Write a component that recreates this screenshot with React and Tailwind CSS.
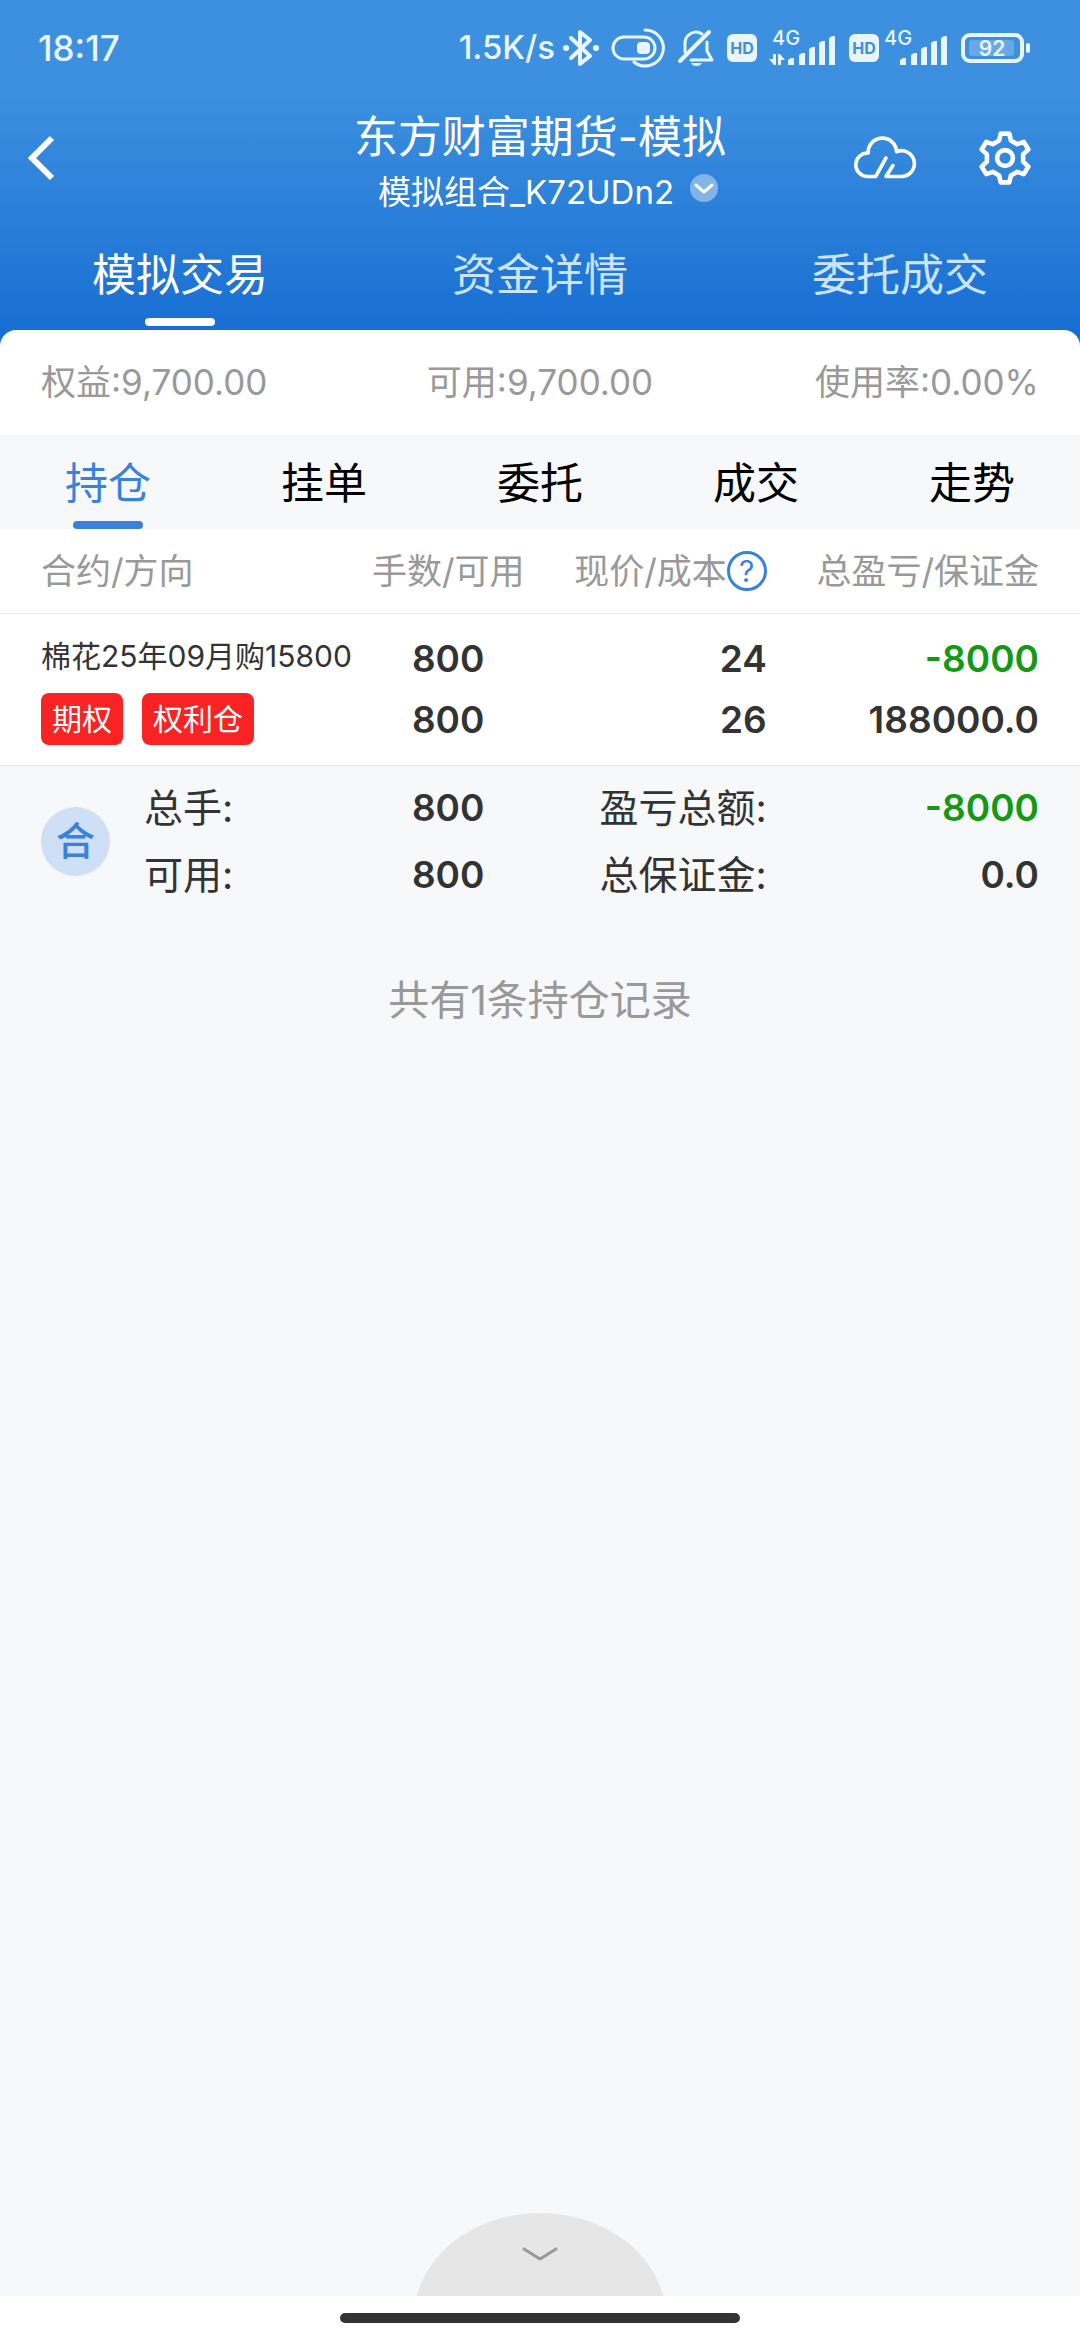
import React, { useState } from 'react';

const FONT = "font-['Inter','Noto_Sans_CJK_SC',sans-serif]";

const mainTabs = ['模拟交易', '资金详情', '委托成交'];
const subTabs = ['持仓', '挂单', '委托', '成交', '走势'];

const stats = [
  { label: '权益', value: '9,700.00' },
  { label: '可用', value: '9,700.00' },
  { label: '使用率', value: '0.00%' },
];

const positions = [
  {
    id: 1,
    name: '棉花25年09月购15800',
    tags: ['期权', '权利仓'],
    volume: '800',
    available: '800',
    price: '24',
    cost: '26',
    profit: '-8000',
    margin: '188000.0',
  },
];

const BluetoothIcon = () => (
  <svg className="w-9 h-10" viewBox="0 0 36 40" fill="none" stroke="currentColor" strokeWidth="4" strokeLinejoin="round" strokeLinecap="round">
    <path d="M8 10 L27 28 L17 36 V4 L27 12 L8 30" />
    <path d="M3 20 h.1 M33 20 h.1" strokeWidth="6" />
  </svg>
);

const ToggleIcon = () => (
  <svg className="w-[54px] h-10" viewBox="0 0 54 40" fill="none" stroke="currentColor" strokeWidth="3" strokeLinecap="round">
    <rect x="2" y="9" width="42" height="22" rx="11" />
    <rect x="26" y="14" width="13" height="12" rx="4" fill="currentColor" stroke="none" />
    <path d="M34 2 A18 18 0 1 1 23 34" />
  </svg>
);

const MuteIcon = () => (
  <svg className="w-[38px] h-10" viewBox="0 0 38 40" fill="none" stroke="currentColor" strokeWidth="3" strokeLinejoin="round" strokeLinecap="round">
    <path d="M32 4 L3 33" strokeWidth="4" />
    <path d="M8 24 V15 A11 11 0 0 1 25 6" />
    <path d="M30 14 V23 L35 32 H14" />
    <path d="M14 35 H25 A6 5 0 0 1 14 35 Z" fill="currentColor" stroke="none" />
  </svg>
);

const HdBadge = () => (
  <span className="flex items-center justify-center w-[30px] h-7 rounded-md bg-[#e8f5ff] text-[#3c90df] text-base font-bold">
    HD
  </span>
);

const SignalIcon = ({ active }) => (
  <svg className={active ? 'w-[68px] h-[52px]' : 'w-[66px] h-[52px]'} viewBox={active ? '0 -8 68 52' : '2 -8 66 52'} fill="currentColor">
    <text x="3" y="15" fontSize="20" fontWeight="500">4G</text>
    {active && <path d="M4 24 h3 v11 h-2 l-5 -6 h4 z M9 24 h2 l5 6 h-4 v5 h-3 z" />}
    <path d="M19 30 l3 -2 h3 v7 h-6 z M30 25 l3 -2 h3 v12 h-6 z M40 19 l3 -2 h3 v18 h-6 z M50 13 l3 -2 h3 v24 h-6 z M60 8 l3 -2 h3 v29 h-6 z" />
  </svg>
);

const BatteryIcon = () => (
  <svg className="w-[69px] h-[30px]" viewBox="0 0 69 30" fill="none">
    <rect x="2" y="2" width="59" height="26" rx="7" stroke="currentColor" strokeWidth="4" />
    <rect x="8" y="7" width="45" height="16" rx="2" fill="currentColor" opacity="0.25" />
    <rect x="65" y="10" width="4" height="10" rx="2" fill="currentColor" />
    <text x="31" y="23" fontSize="21" fontWeight="600" textAnchor="middle" fill="currentColor">92</text>
  </svg>
);

const CloudIcon = () => (
  <svg className="w-[66px] h-[47px]" viewBox="0 0 200 141" fill="none" stroke="currentColor" strokeWidth="11" strokeLinejoin="round" strokeLinecap="round">
    <path d="M103 75 L72 131 H45 A35 35 0 0 1 49 60 A43 43 0 0 1 135 56 A39 39 0 1 1 150 131 H103 L124 98" />
  </svg>
);

const GearIcon = () => (
  <svg className="w-[54px] h-[54px]" viewBox="-82 -82 164 164" fill="none" stroke="currentColor" strokeWidth="14" strokeLinejoin="round">
    <path d="M-18 -53 L-13 -74 H13 L18 -53 L37 -42 L57 -49 L71 -26 L55 -11 V11 L71 26 L57 49 L37 42 L18 53 L13 74 H-13 L-18 53 L-37 42 L-57 49 L-71 26 L-55 11 V-11 L-71 -26 L-57 -49 L-37 -42 Z" />
    <circle r="24" />
  </svg>
);

const StatusBar = () => (
  <div className="flex items-center justify-between h-24 pl-[38px] pr-[50px] text-[#e8f5ff]">
    <span className="text-[35px] font-medium">18:17</span>
    <div className="flex items-center gap-3">
      <div className="flex items-center gap-2">
        <span className="text-[33px] font-medium">1.5K/s</span>
        <BluetoothIcon />
      </div>
      <ToggleIcon />
      <MuteIcon />
      <HdBadge />
      <SignalIcon active />
      <div className="flex items-center gap-1">
        <HdBadge />
        <SignalIcon />
      </div>
      <BatteryIcon />
    </div>
  </div>
);

const Header = ({ tab, onTab }) => (
  <header className="pb-5 -mb-4 text-white bg-linear-to-b from-[#3c90df] from-27% to-[#156cd2]">
    <StatusBar />
    <div className="grid grid-cols-[1fr_auto_1fr] items-center h-[124px] px-7">
      <button aria-label="返回" className="justify-self-start">
        <svg className="w-7 h-12" viewBox="0 0 28 48" fill="none" stroke="currentColor" strokeWidth="6">
          <path d="M24 4 L4 24 L24 44" />
        </svg>
      </button>
      <div className="flex flex-col items-center pt-2">
        <h1 className="text-[44px] leading-[60px]">东方财富期货-模拟</h1>
        <button className="flex items-center gap-4 pl-4 text-[33px] leading-[50px]">
          模拟组合_K72UDn2
          <svg className="w-7 h-7 mb-2" viewBox="0 0 28 28" fill="none">
            <circle cx="14" cy="14" r="14" fill="#fff" fillOpacity="0.4" />
            <path d="M6 11 L14 18 L22 11" stroke="#fff" strokeWidth="3" strokeLinecap="round" strokeLinejoin="round" />
          </svg>
        </button>
      </div>
      <div className="flex items-center justify-self-end gap-[60px] pr-5">
        <button aria-label="云同步" className="pb-1"><CloudIcon /></button>
        <button aria-label="设置"><GearIcon /></button>
      </div>
    </div>
    <nav className="grid grid-cols-3">
      {mainTabs.map((name, i) => (
        <button key={name} onClick={() => onTab(i)} className="flex flex-col items-center h-[106px] pt-3 text-[44px] leading-[86px]">
          <span className={i === tab ? 'text-white' : 'text-[#cbe4fc]'}>{name}</span>
          {i === tab && <span className="w-[70px] h-2 rounded-sm bg-white shrink-0" />}
        </button>
      ))}
    </nav>
  </header>
);

const PositionTable = () => (
  <table className="w-full table-fixed border-collapse whitespace-nowrap text-[#333]">
    <colgroup>
      <col className="w-[33%]" />
      <col className="w-[17%]" />
      <col className="w-[21%]" />
      <col className="w-[29%]" />
    </colgroup>
    <thead className="bg-white text-[35px] text-[#999]">
      <tr className="h-[84px] border-b border-[#ebebeb]">
        <th className="pl-[41px] text-left font-normal">合约/方向</th>
        <th className="font-normal">手数/可用</th>
        <th className="font-normal">
          <div className="flex items-center justify-end">
            现价/成本
            <button aria-label="说明" className="flex items-center justify-center w-10 h-10 rounded-full border-3 border-[#3a81dc] text-[30px] leading-none text-[#3a81dc]">
              ?
            </button>
          </div>
        </th>
        <th className="pr-[41px] text-right font-normal">总盈亏/保证金</th>
      </tr>
    </thead>
    <tbody className="bg-white text-[37px] leading-[61px] font-semibold">
      {positions.map((p) => (
        <tr key={p.id} className="h-[152px] border-b border-[#ebebeb]">
          <td className="pl-[41px] text-[30px] font-normal">
            <div className="leading-[46px]">{p.name}</div>
            <div className="flex gap-[19px] mt-3.5">
              {p.tags.map((tag) => (
                <span key={tag} className="px-[11px] rounded-lg bg-[#fa2323] leading-[52px] text-white">{tag}</span>
              ))}
            </div>
          </td>
          <td className="text-center">
            <div>{p.volume}</div>
            <div>{p.available}</div>
          </td>
          <td className="text-right">
            <div>{p.price}</div>
            <div>{p.cost}</div>
          </td>
          <td className="pr-[41px] text-right">
            <div className="text-[#149914]">{p.profit}</div>
            <div>{p.margin}</div>
          </td>
        </tr>
      ))}
    </tbody>
    <tfoot className="text-[37px] leading-[67px]">
      <tr className="h-[152px]">
        <td className="pl-[41px] text-[39px]">
          <div className="flex items-center gap-[34px]">
            <span className="w-[69px] h-[69px] rounded-full bg-[#cfdff6] text-center font-medium text-[#3a81dc]">合</span>
            <div>
              <div>总手:</div>
              <div>可用:</div>
            </div>
          </div>
        </td>
        <td className="text-center font-semibold">
          <div>800</div>
          <div>800</div>
        </td>
        <td className="text-right text-[39px]">
          <div>盈亏总额:</div>
          <div>总保证金:</div>
        </td>
        <td className="pr-[41px] text-right font-semibold">
          <div className="text-[#149914]">-8000</div>
          <div>0.0</div>
        </td>
      </tr>
    </tfoot>
  </table>
);

const App = () => {
  const [tab, setTab] = useState(0);
  const [subTab, setSubTab] = useState(0);

  return (
    <div className={`flex flex-col min-h-screen bg-[#f7f8fa] ${FONT}`}>
      <Header tab={tab} onTab={setTab} />

      <div className="z-10 grid grid-cols-3 items-center h-[105px] px-[41px] rounded-t-2xl bg-white text-[35px] text-[#999]">
        {stats.map((s) => (
          <span key={s.label} className="text-center first:text-left last:text-right">
            {s.label}:{s.value}
          </span>
        ))}
      </div>

      <nav className="grid grid-cols-5">
        {subTabs.map((name, i) => (
          <button key={name} onClick={() => setSubTab(i)} className="flex flex-col items-center h-[94px] pt-2.5 text-[43px] leading-[76px]">
            <span className={i === subTab ? 'text-[#3a81dc]' : 'text-black'}>{name}</span>
            {i === subTab && <span className="w-[70px] h-2 rounded-sm bg-[#3a81dc] shrink-0" />}
          </button>
        ))}
      </nav>

      <PositionTable />

      <p className="mt-13 text-center text-[41px] leading-[62px] text-[#999]">共有{positions.length}条持仓记录</p>

      <footer className="flex flex-col items-center mt-auto">
        <button aria-label="收起">
          <svg className="block w-[250px] h-[84px]" viewBox="0 0 250 84" fill="none">
            <ellipse cx="125" cy="106" rx="126" ry="105" fill="#e6e6e6" />
            <path d="M109 37 L125 47 L141 37" stroke="#999" strokeWidth="3" strokeLinecap="round" strokeLinejoin="round" />
          </svg>
        </button>
        <div className="flex justify-center w-full pt-[17px] pb-[17px] bg-white">
          <div className="w-[37%] h-2.5 rounded-full bg-[#333]" />
        </div>
      </footer>
    </div>
  );
};

export default App;
